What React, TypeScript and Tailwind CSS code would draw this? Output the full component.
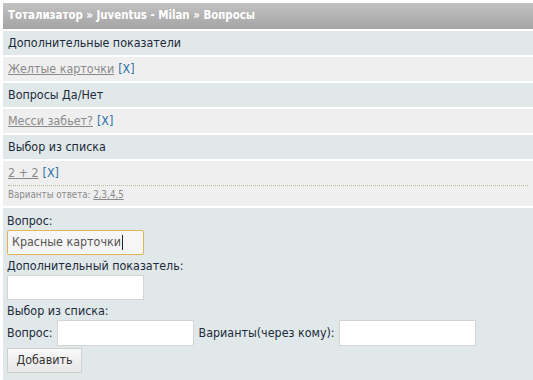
export default function App() {
  const font = { fontFamily: "Tahoma, 'DejaVu Sans Condensed', 'DejaVu Sans', sans-serif" };
  return (
    <div className="min-h-[380px] w-[533px] bg-white pl-[3px] pt-[3px] text-[12.4px] text-[#1c2b3a]" style={font}>
      <div className="flex flex-col gap-[2px]">
        <div className="flex h-[26px] items-center bg-gradient-to-b from-[#c2c2c2] to-[#a4a4a4] px-[5px] text-[11.4px] font-bold text-white">
          Тотализатор » Juventus - Milan » Вопросы
        </div>
        <div className="flex h-[24px] items-center bg-[#e1e8ea] px-[5px]">Дополнительные показатели</div>
        <div className="flex h-[24px] items-center bg-[#f0efef] px-[5px]">
          <a className="text-[#8a8a8a] underline">Желтые карточки</a>
          <span className="ml-[4px] text-[#2a6fa8]">[X]</span>
        </div>
        <div className="flex h-[24px] items-center bg-[#e1e8ea] px-[5px]">Вопросы Да/Нет</div>
        <div className="flex h-[24px] items-center bg-[#f0efef] px-[5px]">
          <a className="text-[#8a8a8a] underline">Месси забьет?</a>
          <span className="ml-[4px] text-[#2a6fa8]">[X]</span>
        </div>
        <div className="flex h-[24px] items-center bg-[#e1e8ea] px-[5px]">Выбор из списка</div>
        <div className="flex h-[45px] flex-col bg-[#f0efef] px-[5px]">
          <div className="flex h-[25px] items-center border-b border-dotted border-[#b8b89a]">
            <a className="text-[#8a8a8a] underline">2 + 2</a>
            <span className="ml-[4px] text-[#2a6fa8]">[X]</span>
          </div>
          <div className="flex h-[19px] items-center text-[9.7px] text-[#8a8a8a]">
            Варианты ответа:&nbsp;<span className="underline">2,3,4,5</span>
          </div>
        </div>
        <div className="flex h-[173px] flex-col bg-[#e1e8ea] px-[4px] pt-[5px]">
          <div className="leading-[15px]">Вопрос:</div>
          <div className="mt-[2px] flex h-[25px] w-[137px] items-center rounded-[2px] border border-[#e2b45a] bg-[#f6f6f6] px-[4px] text-[#555]">
            Красные карточки<span className="ml-[1px] h-[15px] w-px bg-[#222]" />
          </div>
          <div className="mt-[3px] leading-[15px]">Дополнительный показатель:</div>
          <div className="mt-[2px] h-[25px] w-[137px] border border-[#d4d4d4] bg-white" />
          <div className="mt-[3px] leading-[15px]">Выбор из списка:</div>
          <div className="mt-[2px] flex items-center">
            <span>Вопрос:</span>
            <div className="ml-[4px] h-[26px] w-[137px] border border-[#d4d4d4] bg-white" />
            <span className="ml-[5px]">Варианты(через кому):</span>
            <div className="ml-[4px] h-[26px] w-[137px] border border-[#d4d4d4] bg-white" />
          </div>
          <button className="mt-[2px] h-[25px] w-[75px] border border-[#cfcfcf] bg-gradient-to-b from-[#fafafa] to-[#e6e6e6] text-[12.4px] text-[#333]">
            Добавить
          </button>
        </div>
      </div>
    </div>
  );
}
